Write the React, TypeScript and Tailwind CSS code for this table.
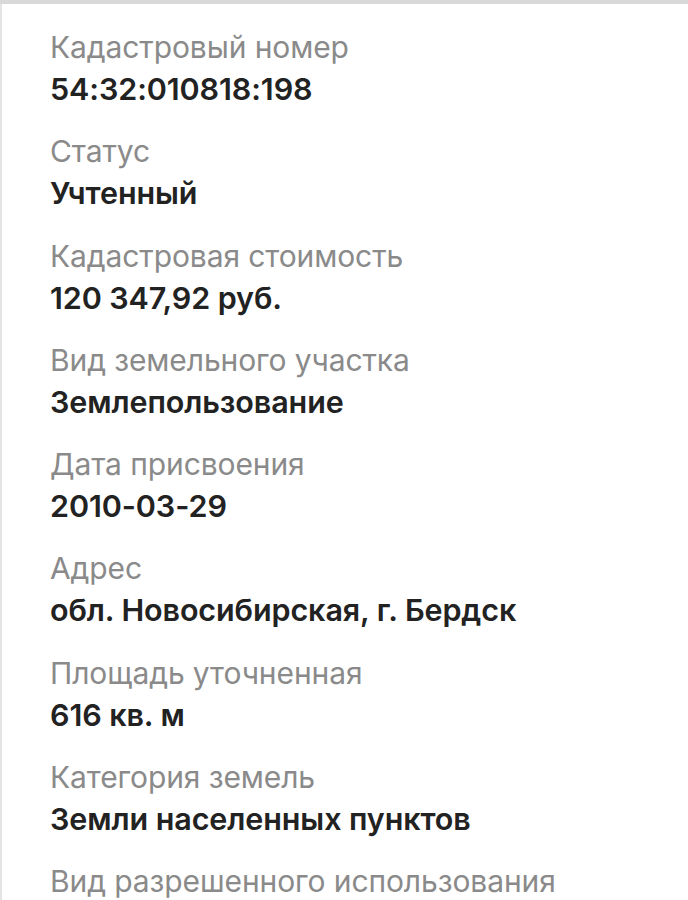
import React from "react";

const items: [string, string][] = [
  ["Кадастровый номер", "54:32:010818:198"],
  ["Статус", "Учтенный"],
  ["Кадастровая стоимость", "120 347,92 руб."],
  ["Вид земельного участка", "Землепользование"],
  ["Дата присвоения", "2010-03-29"],
  ["Адрес", "обл. Новосибирская, г. Бердск"],
  ["Площадь уточненная", "616 кв. м"],
  ["Категория земель", "Земли населенных пунктов"],
  ["Вид разрешенного использования", ""],
];

export default function App() {
  return (
    <div className="w-[688px] h-[900px] overflow-hidden bg-[#d9d9d9] pt-[4px] font-['Inter',sans-serif]">
      <div className="h-full bg-white border-l-2 border-[#e4e4e4] pl-[48px] pt-[23px] flex flex-col gap-[20.3px]">
        {items.map(([label, value]) => (
          <div key={label} className="flex flex-col">
            <div className="text-[30px] leading-[40px] text-[#8a8a8a] tracking-[-0.1px] whitespace-nowrap">{label}</div>
            {value && (
              <div className="text-[30.5px] leading-[44px] text-[#222222] font-semibold tracking-[-0.1px] whitespace-nowrap">{value}</div>
            )}
          </div>
        ))}
      </div>
    </div>
  );
}
